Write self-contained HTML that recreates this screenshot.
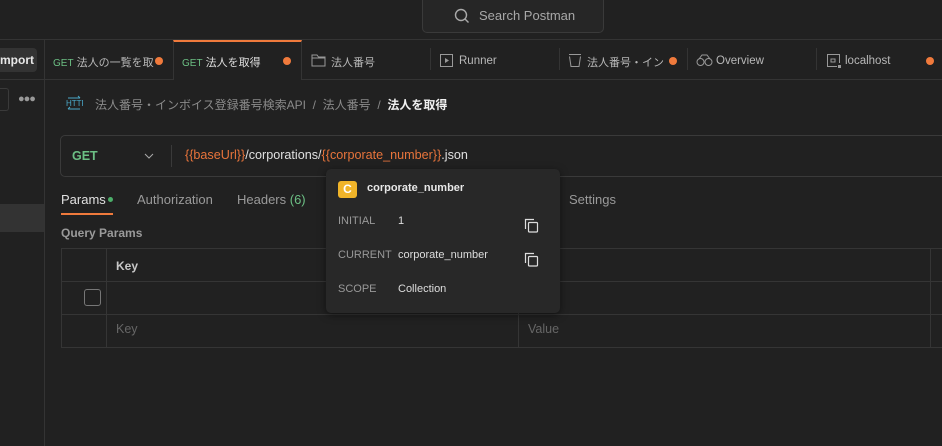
<!DOCTYPE html>
<html><head><meta charset="utf-8"><style>
*{box-sizing:border-box;margin:0;padding:0}
body{width:942px;height:446px;background:#212121;font-family:"Liberation Sans","Noto Sans CJK JP",sans-serif;font-size:12px;color:#b8b8b8;position:relative;overflow:hidden}
.a{position:absolute;white-space:nowrap}
.dot{position:absolute;width:8px;height:8px;border-radius:50%;background:#f07a3c}
.g{color:#6cbf84}
.o{color:#e8743b}
.t{font-size:11.5px}
.j{font-size:11px}
</style></head><body>
<div class="a" style="left:0;top:39px;width:942px;height:1px;background:#343434"></div>
<div class="a" style="left:422px;top:0;width:182px;height:33px;border:1px solid #3a3a3a;border-top:none;border-radius:0 0 5px 5px;background:#262626"></div>
<svg class="a" style="left:454px;top:8px" width="16" height="16" viewBox="0 0 16 16"><circle cx="7" cy="7" r="5.5" fill="none" stroke="#aaa" stroke-width="1.4"/><path d="M11 11l3.5 3.5" stroke="#aaa" stroke-width="1.4"/></svg>
<div class="a" style="left:479px;top:8px;font-size:13px;color:#a8a8a8">Search Postman</div>
<div class="a" style="left:0;top:79px;width:942px;height:1px;background:#343434"></div>
<div class="a" style="left:0;top:48px;width:37px;height:24px;background:#333;border-radius:0 4px 4px 0"></div>
<div class="a" style="left:0;top:53px;font-size:12px;font-weight:bold;color:#e8e8e8">mport</div>
<div class="a" style="left:44px;top:40px;width:1px;height:406px;background:#343434"></div>
<div class="a j" style="left:53px;top:54px"><span class="g" style="font-size:10px">GET</span> 法人の一覧を取</div>
<div class="dot" style="left:155px;top:57px"></div>
<div class="a" style="left:173px;top:40px;width:129px;height:40px;background:#212121;border-left:1px solid #343434;border-right:1px solid #343434;border-top:2px solid #f07a3c"></div>
<div class="a j" style="left:182px;top:54px;color:#ddd"><span class="g" style="font-size:10px">GET</span> 法人を取得</div>
<div class="dot" style="left:283px;top:57px"></div>
<svg class="a" style="left:311px;top:53px" width="15" height="14" viewBox="0 0 15 14"><path d="M1 2h5l1.5 2H14v9H1z M1 5h13" fill="none" stroke="#999" stroke-width="1"/></svg>
<div class="a j" style="left:331px;top:54px">法人番号</div>
<div class="a" style="left:430px;top:48px;width:1px;height:22px;background:#343434"></div>
<svg class="a" style="left:440px;top:54px" width="13" height="13"><rect x=".5" y=".5" width="12" height="12" fill="none" stroke="#999"/><path d="M5 4l4 2.5-4 2.5z" fill="#999"/></svg>
<div class="a t" style="left:459px;top:55px">Runner</div>
<div class="a" style="left:559px;top:48px;width:1px;height:22px;background:#343434"></div>
<svg class="a" style="left:568px;top:53px" width="14" height="15"><path d="M1 1.5h12M1.5 3.5l1.5 10h8l1.5-10" fill="none" stroke="#999"/></svg>
<div class="a j" style="left:587px;top:54px">法人番号・イン</div>
<div class="dot" style="left:669px;top:57px"></div>
<div class="a" style="left:687px;top:48px;width:1px;height:22px;background:#343434"></div>
<svg class="a" style="left:696px;top:53px" width="17" height="14"><circle cx="4.5" cy="9" r="3.5" fill="none" stroke="#999"/><circle cx="12.5" cy="9" r="3.5" fill="none" stroke="#999"/><path d="M3 6l3-4h5l3 4" fill="none" stroke="#999"/></svg>
<div class="a t" style="left:716px;top:55px">Overview</div>
<div class="a" style="left:816px;top:48px;width:1px;height:22px;background:#343434"></div>
<svg class="a" style="left:826px;top:53px" width="15" height="15"><path d="M13.5 10V1.5h-12v12H11" fill="none" stroke="#999"/><rect x="5" y="6" width="4" height="3" fill="none" stroke="#999"/><rect x="12" y="12" width="3" height="3" fill="#999"/></svg>
<div class="a t" style="left:845px;top:55px">localhost</div>
<div class="dot" style="left:926px;top:57px"></div>
<div class="a" style="left:0;top:88px;width:9px;height:23px;border:1px solid #3a3a3a;border-left:none;border-radius:0 3px 3px 0"></div>
<div class="a" style="left:18px;top:93px;font-size:11px;color:#999;letter-spacing:-1px">●●●</div>
<div class="a" style="left:0;top:204px;width:44px;height:28px;background:#333"></div>
<svg class="a" style="left:65px;top:95px" width="18" height="16"><text x="1" y="11" font-size="8" fill="#4aa8c8" font-family="Liberation Sans">HTTP</text><path d="M3 3h12M13 1l2 2M3 14h12M5 12l-2 2" stroke="#4aa8c8" fill="none"/></svg>
<div class="a" style="left:95px;top:96px;font-size:12px;color:#8a8a8a">法人番号・インボイス登録番号検索API &nbsp;/&nbsp; 法人番号 &nbsp;/&nbsp; <span style="color:#f0f0f0;font-weight:bold">法人を取得</span></div>
<div class="a" style="left:60px;top:135px;width:900px;height:42px;border:1px solid #3a3a3a;border-radius:5px"></div>
<div class="a g" style="left:72px;top:149px;font-size:12.5px;font-weight:bold">GET</div>
<svg class="a" style="left:144px;top:153px" width="10" height="6"><path d="M1 1l4 4 4-4" stroke="#aaa" fill="none"/></svg>
<div class="a" style="left:171px;top:145px;width:1px;height:22px;background:#3a3a3a"></div>
<div class="a" style="left:185px;top:148px;font-size:12.6px;color:#e0e0e0"><span class="o">{{baseUrl}}</span>/corporations/<span class="o">{{corporate_number}}</span>.json</div>
<div class="a" style="left:61px;top:192px;font-size:13px;color:#e0e0e0">Params</div>
<div class="a" style="left:108px;top:197px;width:5px;height:5px;border-radius:50%;background:#4caf6a"></div>
<div class="a" style="left:61px;top:213px;width:52px;height:2px;background:#f07a3c"></div>
<div class="a" style="left:137px;top:192px;font-size:13px;color:#9a9a9a">Authorization</div>
<div class="a" style="left:237px;top:192px;font-size:13px;color:#9a9a9a">Headers <span class="g">(6)</span></div>
<div class="a" style="left:569px;top:192px;font-size:13px;color:#9a9a9a">Settings</div>
<div class="a" style="left:61px;top:226px;font-size:12px;font-weight:bold;color:#9a9a9a">Query Params</div>
<div class="a" style="left:61px;top:248px;width:900px;height:100px;border:1px solid #353535"></div>
<div class="a" style="left:61px;top:281px;width:900px;height:1px;background:#353535"></div>
<div class="a" style="left:61px;top:314px;width:900px;height:1px;background:#353535"></div>
<div class="a" style="left:106px;top:248px;width:1px;height:100px;background:#353535"></div>
<div class="a" style="left:518px;top:248px;width:1px;height:100px;background:#353535"></div>
<div class="a" style="left:930px;top:248px;width:1px;height:100px;background:#353535"></div>
<div class="a" style="left:116px;top:259px;font-size:12px;font-weight:bold;color:#c8c8c8">Key</div>
<div class="a" style="left:84px;top:289px;width:17px;height:17px;border:1px solid #777;border-radius:3px"></div>
<div class="a" style="left:116px;top:322px;font-size:12.5px;color:#666">Key</div>
<div class="a" style="left:528px;top:322px;font-size:12.5px;color:#666">Value</div>
<div class="a" style="left:326px;top:169px;width:234px;height:144px;background:#282828;border-radius:5px;box-shadow:0 2px 8px rgba(0,0,0,.5)"></div>
<div class="a" style="left:338px;top:181px;width:19px;height:17px;background:#f0b429;border-radius:3px;color:#fff;font-weight:bold;font-size:12px;text-align:center;line-height:17px">C</div>
<div class="a" style="left:367px;top:182px;font-size:11px;font-weight:bold;color:#e8e8e8">corporate_number</div>
<div class="a" style="left:338px;top:215px;font-size:11px;color:#999">INITIAL</div>
<div class="a" style="left:398px;top:215px;font-size:11px;color:#ddd">1</div>
<div class="a" style="left:338px;top:249px;font-size:11px;color:#999">CURRENT</div>
<div class="a" style="left:398px;top:249px;font-size:11px;color:#ddd">corporate_number</div>
<div class="a" style="left:338px;top:283px;font-size:11px;color:#999">SCOPE</div>
<div class="a" style="left:398px;top:283px;font-size:11px;color:#ddd">Collection</div>
<svg class="a" style="left:524px;top:218px" width="15" height="15"><path d="M1.5 11V1.5H10" fill="none" stroke="#ddd" stroke-width="1.2"/><rect x="4.5" y="4.5" width="9" height="9.5" rx="1" fill="none" stroke="#ddd" stroke-width="1.2"/></svg>
<svg class="a" style="left:524px;top:252px" width="15" height="15"><path d="M1.5 11V1.5H10" fill="none" stroke="#ddd" stroke-width="1.2"/><rect x="4.5" y="4.5" width="9" height="9.5" rx="1" fill="none" stroke="#ddd" stroke-width="1.2"/></svg>
</body></html>
